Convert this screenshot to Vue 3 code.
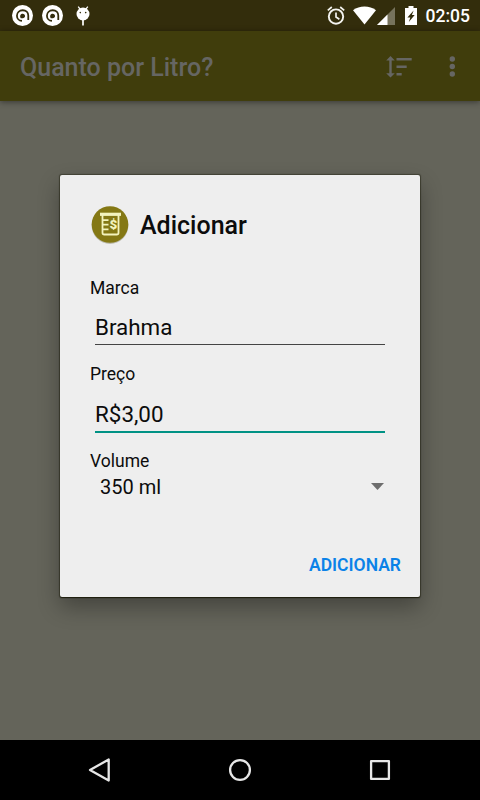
<template>
  <main class="screen">
    <header class="status">
      <div class="notifications">
        <svg v-for="n in 2" :key="n" class="avast" viewBox="0 0 20 20">
          <circle cx="10" cy="10" r="10" fill="#fff" />
          <path d="M9.500 15.200C6.500 15 4.700 12.700 4.700 10.200c0-3 2.400-5.200 5.500-5.200 3.100 0 5.300 2.100 5.300 5v4.400" fill="none" stroke="#332d0c" stroke-width="1.700" />
          <path d="M8.300 12.600c-1.300-2.500 0-4.300 1.900-4.300 1.300 0 2.200 0.900 2.200 2.100 0 1.400-1.100 2.300-2.600 2.100z" fill="#332d0c" />
        </svg>
        <svg class="droid" viewBox="0 0 14 20">
          <path d="M2.2 0.6l1.9 2.6M11.8 0.6L9.9 3.2" stroke="#fff" stroke-width="1.3" />
          <circle cx="7" cy="8" r="6.5" fill="#fff" />
          <path d="M7 14v5.500" stroke="#fff" stroke-width="1.700" />
          <circle cx="4.3" cy="6.6" r="0.8" fill="#332d0c" />
          <circle cx="9.7" cy="6.6" r="0.8" fill="#332d0c" />
        </svg>
      </div>
      <div class="system">
        <svg class="alarm" viewBox="0 0 18 20">
          <circle cx="9" cy="10.6" r="7.2" fill="none" stroke="#f4f4f0" stroke-width="1.9" />
          <path d="M9 6.4v4.6l3.4 2.2M0.8 4.4l4-3.4M17.2 4.4l-4-3.4" fill="none" stroke="#f4f4f0" stroke-width="1.7" />
        </svg>
        <svg class="wifi" viewBox="0 0 23 19">
          <path d="M0 4.200C6.400-0.700 16.600-0.700 23 4.200L11.500 18.500z" fill="#fff" />
        </svg>
        <svg class="signal" viewBox="0 0 18 18">
          <path d="M0 18L18 0v18z" fill="#77735c" />
          <path d="M0 18L10.500 7.500V18z" fill="#fff" />
        </svg>
        <svg class="battery" viewBox="0 0 12 19">
          <path d="M3.500 0h5v2H12v17H0V2h3.500z" fill="#fff" />
          <path d="M8.600 4.600L2.400 11.600h2.900L3.800 16l5.900-7H6.900z" fill="#332d0c" />
        </svg>
        <span class="clock">02:05</span>
      </div>
    </header>

    <nav class="toolbar">
      <h1>Quanto por Litro?</h1>
      <svg class="sort" viewBox="0 0 26 22">
        <path d="M4.500 0l4.300 4.400H5.700v12.800h3.100L4.500 21.600.2 17.200h3.100V4.400H.2z" />
        <path d="M10.500 2h15.200v2.500H10.500zM10.500 9.600h10.200v2.500H10.500zM10.500 17h5.200v2.500h-5.200z" />
      </svg>
      <svg class="more" viewBox="0 0 6 22">
        <circle cx="3.300" cy="3" r="2.700" />
        <circle cx="3.300" cy="10.500" r="2.700" />
        <circle cx="3.300" cy="18" r="2.700" />
      </svg>
    </nav>

    <section class="content">
      <form class="dialog" @submit.prevent>
        <div class="heading">
          <svg class="logo" viewBox="0 0 40 40">
            <circle cx="20" cy="20.500" r="18.400" fill="#bdbcae" />
            <circle cx="20" cy="19.500" r="18.300" fill="#847814" />
            <path d="M10 9.300h21" stroke="#f3f3bd" stroke-width="3.200" />
            <path d="M12.500 10v17.700q0 1.800 1.800 1.800h12.400q1.800 0 1.800-1.800V10M12.500 15.100h6M12.500 19.700h6M12.500 24.300h6" fill="none" stroke="#f3f3bd" stroke-width="1.800" />
            <text x="23.300" y="24.200" text-anchor="middle">$</text>
          </svg>
          <h2>Adicionar</h2>
        </div>

        <div v-for="campo in campos" :key="campo.nome" class="field">
          <label>{{ campo.nome }}</label>
          <div class="input" :class="{ focused: campo.foco }">{{ campo.valor }}</div>
        </div>

        <label>Volume</label>
        <div class="spinner">
          <span>{{ volume }}</span>
          <svg viewBox="0 0 14 7"><path d="M0 0h13L6.500 7z" fill="#6d6d6d" /></svg>
        </div>

        <button type="submit">ADICIONAR</button>
      </form>
    </section>

    <footer class="navbar">
      <svg viewBox="0 0 24 24"><path d="M20.700 1.500v21L2 12z" /></svg>
      <svg viewBox="0 0 24 24"><circle cx="12" cy="12" r="9.900" /></svg>
      <svg viewBox="0 0 24 24"><rect x="3.100" y="3.100" width="17.800" height="17.800" /></svg>
    </footer>
  </main>
</template>

<script setup>
import { reactive, ref } from 'vue';

const volume = ref('350 ml');
const campos = reactive([
  { nome: 'Marca', valor: 'Brahma', foco: false },
  { nome: 'Preço', valor: 'R$3,00', foco: true }
]);
</script>

<style>
body {
  margin: 0;
  background: #000;
}
</style>

<style scoped>
.screen {
  width: 480px;
  height: 800px;
  display: flex;
  flex-direction: column;
  overflow: hidden;
  background: #64645a;
  font-family: Roboto, sans-serif;
}
svg {
  display: block;
  flex: none;
}
h1,
h2 {
  margin: 0;
  font-size: 25px;
  font-weight: 500;
}
.status {
  height: 31px;
  display: flex;
  justify-content: space-between;
  background: #332d0c;
}
.notifications,
.system {
  display: flex;
  align-items: flex-start;
}
.notifications {
  padding: 5px 0 0 12px;
}
.avast {
  width: 21px;
  height: 21px;
  margin-right: 9px;
}
.droid {
  width: 14px;
  height: 20px;
  margin: 1px 0 0 3.5px;
}
.system {
  padding: 6px 10px 0 0;
}
.alarm {
  width: 18px;
  height: 20px;
  margin-right: 8px;
}
.wifi {
  width: 23px;
  height: 19px;
  margin-right: 1px;
}
.signal {
  width: 18px;
  height: 18px;
  margin: 1px 10px 0 0;
}
.battery {
  width: 12px;
  height: 19px;
  margin-right: 9px;
}
.clock {
  color: #fff;
  font-size: 17.5px;
  font-weight: 500;
  line-height: 21px;
}
.toolbar {
  height: 70px;
  box-sizing: border-box;
  padding: 0 25px 0 20px;
  display: flex;
  align-items: center;
  background: #403d0c;
  box-shadow: 0 1px 6px rgba(0, 0, 0, 0.45);
  color: #666663;
  z-index: 1;
}
.toolbar h1 {
  flex: 1;
  padding-top: 3px;
}
.toolbar svg {
  margin-top: 1px;
  fill: #666663;
}
.sort {
  width: 26px;
  height: 22px;
  margin-right: 37px;
}
.more {
  width: 6px;
  height: 22px;
}
.content {
  flex: 1;
  display: flex;
  flex-direction: column;
  align-items: center;
  padding-top: 74px;
}
.dialog {
  width: 360px;
  height: 422px;
  box-sizing: border-box;
  padding: 25px 35px 0 30px;
  display: flex;
  flex-direction: column;
  border-radius: 2px;
  background: #eee;
  box-shadow: 0 1px 1px rgba(20, 20, 0, 0.7), 0 0 1px 0.5px rgba(20, 20, 0, 0.4), 0 10px 22px rgba(0, 0, 0, 0.32);
  color: #0c0c0c;
}
.heading {
  height: 50px;
  margin-bottom: 26px;
  display: flex;
  align-items: center;
  gap: 10px;
}
.logo {
  width: 40px;
  height: 40px;
}
.logo text {
  fill: #f3f3bd;
  font-size: 13.5px;
  font-weight: 900;
}
label {
  display: block;
  font-size: 17.5px;
  line-height: 24px;
}
.field {
  margin-bottom: 17px;
}
.field:nth-of-type(3) .input {
  padding-top: 11px;
}
.input {
  height: 34px;
  margin-left: 5px;
  padding-top: 10px;
  border-bottom: 1px solid #444;
  font-size: 22.4px;
  line-height: 34px;
}
.input.focused {
  padding-top: 11px;
  border-bottom: 2px solid #009284;
}
.field + .field {
  margin-bottom: 16px;
}
.spinner {
  height: 27px;
  padding: 0 0 0 10px;
  display: flex;
  align-items: center;
  justify-content: space-between;
  font-size: 20px;
}
.spinner svg {
  width: 14px;
  height: 7px;
}
button {
  align-self: flex-end;
  height: 50px;
  margin: 40px -16px 0 0;
  padding: 0;
  border: 0;
  background: none;
  color: #0b82e8;
  font-family: inherit;
  font-size: 17.5px;
  font-weight: 600;
}
.navbar {
  height: 60px;
  display: flex;
  align-items: center;
  justify-content: center;
  gap: 116px;
  background: #000;
}
.navbar svg {
  width: 24px;
  height: 24px;
  fill: none;
  stroke: #e6e6e6;
  stroke-width: 2.3;
  stroke-linejoin: round;
}
</style>
